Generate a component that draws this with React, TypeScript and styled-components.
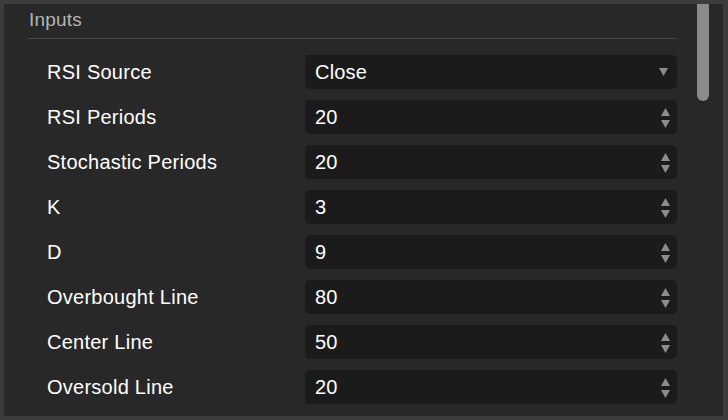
import * as React from 'react';
import styled, { createGlobalStyle } from 'styled-components';

const GlobalStyle = createGlobalStyle`
  html, body {
    margin: 0;
    padding: 0;
    background: #3c3c3c;
  }
  * {
    box-sizing: border-box;
  }
`;

type Field = { label: string; value: string; kind: 'select' | 'number' };

const fields: Field[] = [
  { label: 'RSI Source', value: 'Close', kind: 'select' },
  { label: 'RSI Periods', value: '20', kind: 'number' },
  { label: 'Stochastic Periods', value: '20', kind: 'number' },
  { label: 'K', value: '3', kind: 'number' },
  { label: 'D', value: '9', kind: 'number' },
  { label: 'Overbought Line', value: '80', kind: 'number' },
  { label: 'Center Line', value: '50', kind: 'number' },
  { label: 'Oversold Line', value: '20', kind: 'number' },
];

const Triangle: React.FC<{ up?: boolean }> = ({ up }) => (
  <svg width="9" height="8" viewBox="0 0 9 8">
    {up ? (
      <polygon points="4.5,0 9,8 0,8" fill="#8c8c8c" />
    ) : (
      <polygon points="0,0 9,0 4.5,8" fill="#8c8c8c" />
    )}
  </svg>
);

const App: React.FC = () => {
  return (
    <>
      <GlobalStyle />
      <Panel>
        <Section>
          <Title>Inputs</Title>
          <Rows>
            {fields.map((f) => (
              <Row key={f.label}>
                <Label>{f.label}</Label>
                <Input>
                  <Value>{f.value}</Value>
                  {f.kind === 'select' ? (
                    <SelectArrow>
                      <Triangle />
                    </SelectArrow>
                  ) : (
                    <Spinner>
                      <Triangle up />
                      <Triangle />
                    </Spinner>
                  )}
                </Input>
              </Row>
            ))}
          </Rows>
        </Section>
        <ScrollThumb />
      </Panel>
    </>
  );
};

const Panel = styled.div`
  position: relative;
  width: 728px;
  height: 420px;
  border: 4px solid #3c3c3c;
  border-right-width: 5px;
  background: #282828;
  overflow: hidden;
  font-family: 'Liberation Sans', Arial, sans-serif;
`;

const Section = styled.div`
  padding: 0 46px 0 24px;
`;

const Title = styled.div`
  height: 35px;
  line-height: 32px;
  padding-left: 1px;
  font-size: 19px;
  letter-spacing: 0.2px;
  color: #b4b4b4;
  border-bottom: 1px solid #474747;
`;

const Rows = styled.div`
  display: flex;
  flex-direction: column;
  gap: 11px;
  padding-top: 16px;
`;

const Row = styled.div`
  display: flex;
  align-items: center;
  height: 34px;
`;

const Label = styled.div`
  width: 277px;
  padding-left: 19px;
  font-size: 20px;
  letter-spacing: 0.25px;
  color: #ffffff;
  white-space: nowrap;
`;

const Input = styled.div`
  flex: 1;
  height: 34px;
  display: flex;
  align-items: center;
  justify-content: space-between;
  padding: 0 7px 0 10px;
  background: #1b1b1b;
  border-radius: 5px;
`;

const Value = styled.span`
  font-size: 20px;
  letter-spacing: 0.2px;
  color: #ffffff;
`;

const SelectArrow = styled.span`
  display: flex;
  margin-right: 2px;
`;

const Spinner = styled.span`
  display: flex;
  flex-direction: column;
  gap: 4px;
  padding-top: 1px;
`;

const ScrollThumb = styled.div`
  position: absolute;
  top: 0;
  right: 14px;
  width: 12px;
  height: 97px;
  background: #8a8a8a;
  border-radius: 0 0 6px 6px;
`;

export default App;
